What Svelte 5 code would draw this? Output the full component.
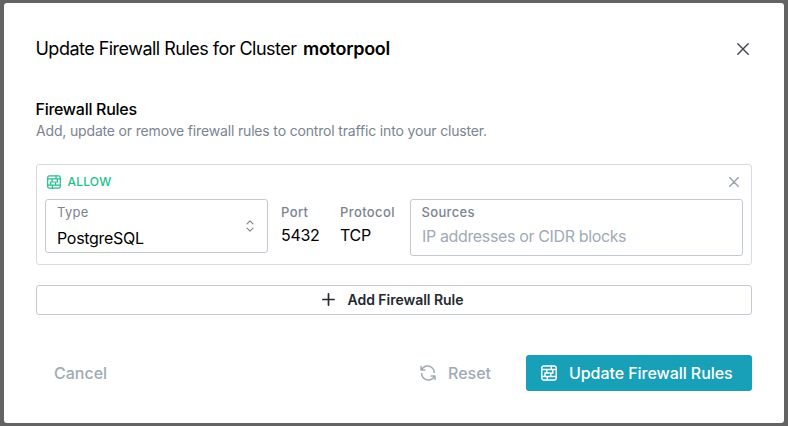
<script>
  const facts = [
    { label: 'Port', value: '5432', key: 'port' },
    { label: 'Protocol', value: 'TCP', key: 'protocol' },
  ];
</script>

{#snippet wall(size)}
  <svg class="icon" width={size} height={size} viewBox="0 0 16 16" fill="none" stroke="currentColor" stroke-width="1.4" stroke-linecap="round" stroke-linejoin="round">
    <rect x=".8" y="1" width="14.4" height="14" rx="2" />
    <path d="M1 4.500H15M3.800 8h4.700M10.500 8h1.700M1 11.500H15M10.300 1v3.500M5.800 4.500V8M11.800 4.500V8M4 8v3.500M9.800 8v3.500M6.300 11.500V15" />
  </svg>
{/snippet}

<div class="overlay">
  <div class="modal" role="dialog" aria-labelledby="title">
    <header>
      <h1 id="title"><span class="lead">Update Firewall Rules for Cluster</span><b>motorpool</b></h1>
      <button class="plain close" aria-label="Close">
        <svg class="icon" width="12" height="12" viewBox="0 0 12 12" stroke="currentColor" stroke-width="1.4" stroke-linecap="round"><path d="M.8.8l10.4 10.4M11.2.8L.8 11.2" /></svg>
      </button>
    </header>

    <h2>Firewall Rules</h2>
    <p class="hint">Add, update or remove firewall rules to control traffic into your cluster.</p>

    <section class="rule">
      <div class="rule-head">
        <span class="allow">{@render wall(14)}<span>ALLOW</span></span>
        <button class="plain remove" aria-label="Remove rule">
          <svg class="icon" width="10" height="10" viewBox="0 0 10 10" stroke="currentColor" stroke-width="1.4" stroke-linecap="round"><path d="M.6.6l8.8 8.8M9.4.6L.6 9.4" /></svg>
        </button>
      </div>
      <div class="fields">
        <div class="select">
          <div>
            <div class="label type-label">Type</div>
            <div class="value type-value">PostgreSQL</div>
          </div>
          <svg class="icon" width="8" height="12" viewBox="0 0 8 12" fill="none" stroke="#7b8490" stroke-width="1.1" stroke-linecap="round" stroke-linejoin="round"><path d="M1 3.800l3-3 3 3M1 8.200l3 3 3-3" /></svg>
        </div>
        {#each facts as fact}
          <div class="fact {fact.key}">
            <div class="label">{fact.label}</div>
            <div class="value">{fact.value}</div>
          </div>
        {/each}
        <div class="sources">
          <div class="label">Sources</div>
          <div class="placeholder">IP addresses or CIDR blocks</div>
        </div>
      </div>
    </section>

    <button class="add">
      <svg class="icon" width="13" height="13" viewBox="0 0 13 13" stroke="currentColor" stroke-width="1.7" stroke-linecap="round"><path d="M6.500 .9v11.200M.9 6.500h11.200" /></svg>
      <span>Add Firewall Rule</span>
    </button>

    <footer>
      <button class="plain cancel">Cancel</button>
      <button class="plain reset">
        <svg class="icon" width="16" height="16" viewBox="0 0 16 16" fill="none" stroke="currentColor" stroke-width="1.5" stroke-linecap="round" stroke-linejoin="round">
          <path d="M1 1.500V5h3.800M15 14.500V11h-3.800M1.400 4.800C3.200 1.200 7.500.1 10.800 1.900 13.100 3.200 14.200 5.300 14.200 7.600M14.600 11.200C12.800 14.800 8.500 15.900 5.200 14.100 2.900 12.800 1.700 10.700 1.700 8.400" />
        </svg>
        <span>Reset</span>
      </button>
      <button class="submit">{@render wall(16)}<span>Update Firewall Rules</span></button>
    </footer>
  </div>
</div>

<style>
  :global(body) { background: #636363; }
  * { box-sizing: border-box; }
  .overlay {
    height: 426px;
    padding: 3px 4px;
    background: #636363;
    font-family: Inter, sans-serif;
    color: #000;
  }
  .modal {
    height: 420px;
    padding: 32px;
    background: #fff;
    border-radius: 3px;
  }
  .icon { display: block; flex: none; }
  button { margin: 0; font: inherit; cursor: pointer; display: flex; align-items: center; }
  .plain { padding: 0; border: 0; background: none; }
  header { display: flex; align-items: center; justify-content: space-between; height: 28px; }
  h1 { margin: 0 0 0 -0.5px; font-size: 18px; line-height: 28px; font-weight: 400; letter-spacing: -0.52px; white-space: nowrap; }
  .lead { margin-right: 6.5px; }
  b { font-weight: 600; letter-spacing: -0.28px; }
  .close { margin-right: 3px; color: #3d444d; }
  h2 { margin: 34px 0 0 -0.5px; font-size: 16px; line-height: 24px; font-weight: 500; letter-spacing: -0.28px; }
  .hint { margin: 0; font-size: 14px; line-height: 20px; color: #7b8490; letter-spacing: -0.165px; }
  .rule {
    margin-top: 23px;
    height: 101px;
    padding: 8px;
    border: 1px solid #d8dbdf;
    border-radius: 3px;
  }
  .rule-head { display: flex; align-items: center; justify-content: space-between; height: 18px; padding: 0 4px 0 2px; }
  .allow { display: flex; align-items: center; gap: 6.5px; margin-top: -1px; font-size: 12px; font-weight: 500; letter-spacing: 0.2px; color: #20c08a; }
  .remove { color: #9aa3ae; }
  .fields { display: flex; align-items: flex-start; margin-top: 8px; }
  .label { font-size: 13px; line-height: 16px; font-weight: 500; letter-spacing: 0.4px; color: #7b8490; }
  .value, .placeholder { font-size: 16px; line-height: 24px; letter-spacing: -0.3px; white-space: nowrap; }
  .placeholder { color: #a1aab5; }
  .select {
    display: flex;
    align-items: center;
    justify-content: space-between;
    width: 223px;
    height: 54px;
    padding: 0 13px 0 11px;
    border: 1px solid #c4cad2;
    border-radius: 3px;
  }
  .type-label { padding-top: 2px; height: 18px; font-weight: 400; letter-spacing: 0.3px; }
  .type-value { margin-top: 6px; }
  .fact { padding-top: 5px; }
  .fact .value { margin-top: 3px; }
  .port { width: 59px; margin-left: 13px; }
  .protocol { width: 70px; }
  .sources { flex: 1; height: 57px; padding: 4px 10.5px; border: 1px solid #c4cad2; border-radius: 3px; }
  .sources .label { letter-spacing: 0.35px; }
  .placeholder { margin-top: 4px; padding-left: 0.5px; letter-spacing: -0.36px; }
  .add {
    justify-content: center;
    gap: 13px;
    width: 100%;
    height: 30px;
    margin-top: 20px;
    padding: 0 3px 1px 0;
    border: 1px solid #c4cad2;
    border-radius: 3px;
    background: #fff;
    color: #25292e;
    font-size: 14px;
    font-weight: 600;
    letter-spacing: -0.03px;
  }
  footer { display: flex; align-items: center; margin-top: 40px; height: 36px; font-size: 16px; font-weight: 500; }
  .cancel { margin-left: 18px; color: #a1aab5; }
  .reset { gap: 12px; margin-left: auto; margin-right: 35px; color: #a1aab5; }
  .submit {
    gap: 12px;
    width: 226px;
    height: 36px;
    padding: 0 0 0 15px;
    border: 0;
    border-radius: 3px;
    background: #18a0b8;
    color: #fff;
    letter-spacing: -0.06px;
    white-space: nowrap;
  }
</style>
